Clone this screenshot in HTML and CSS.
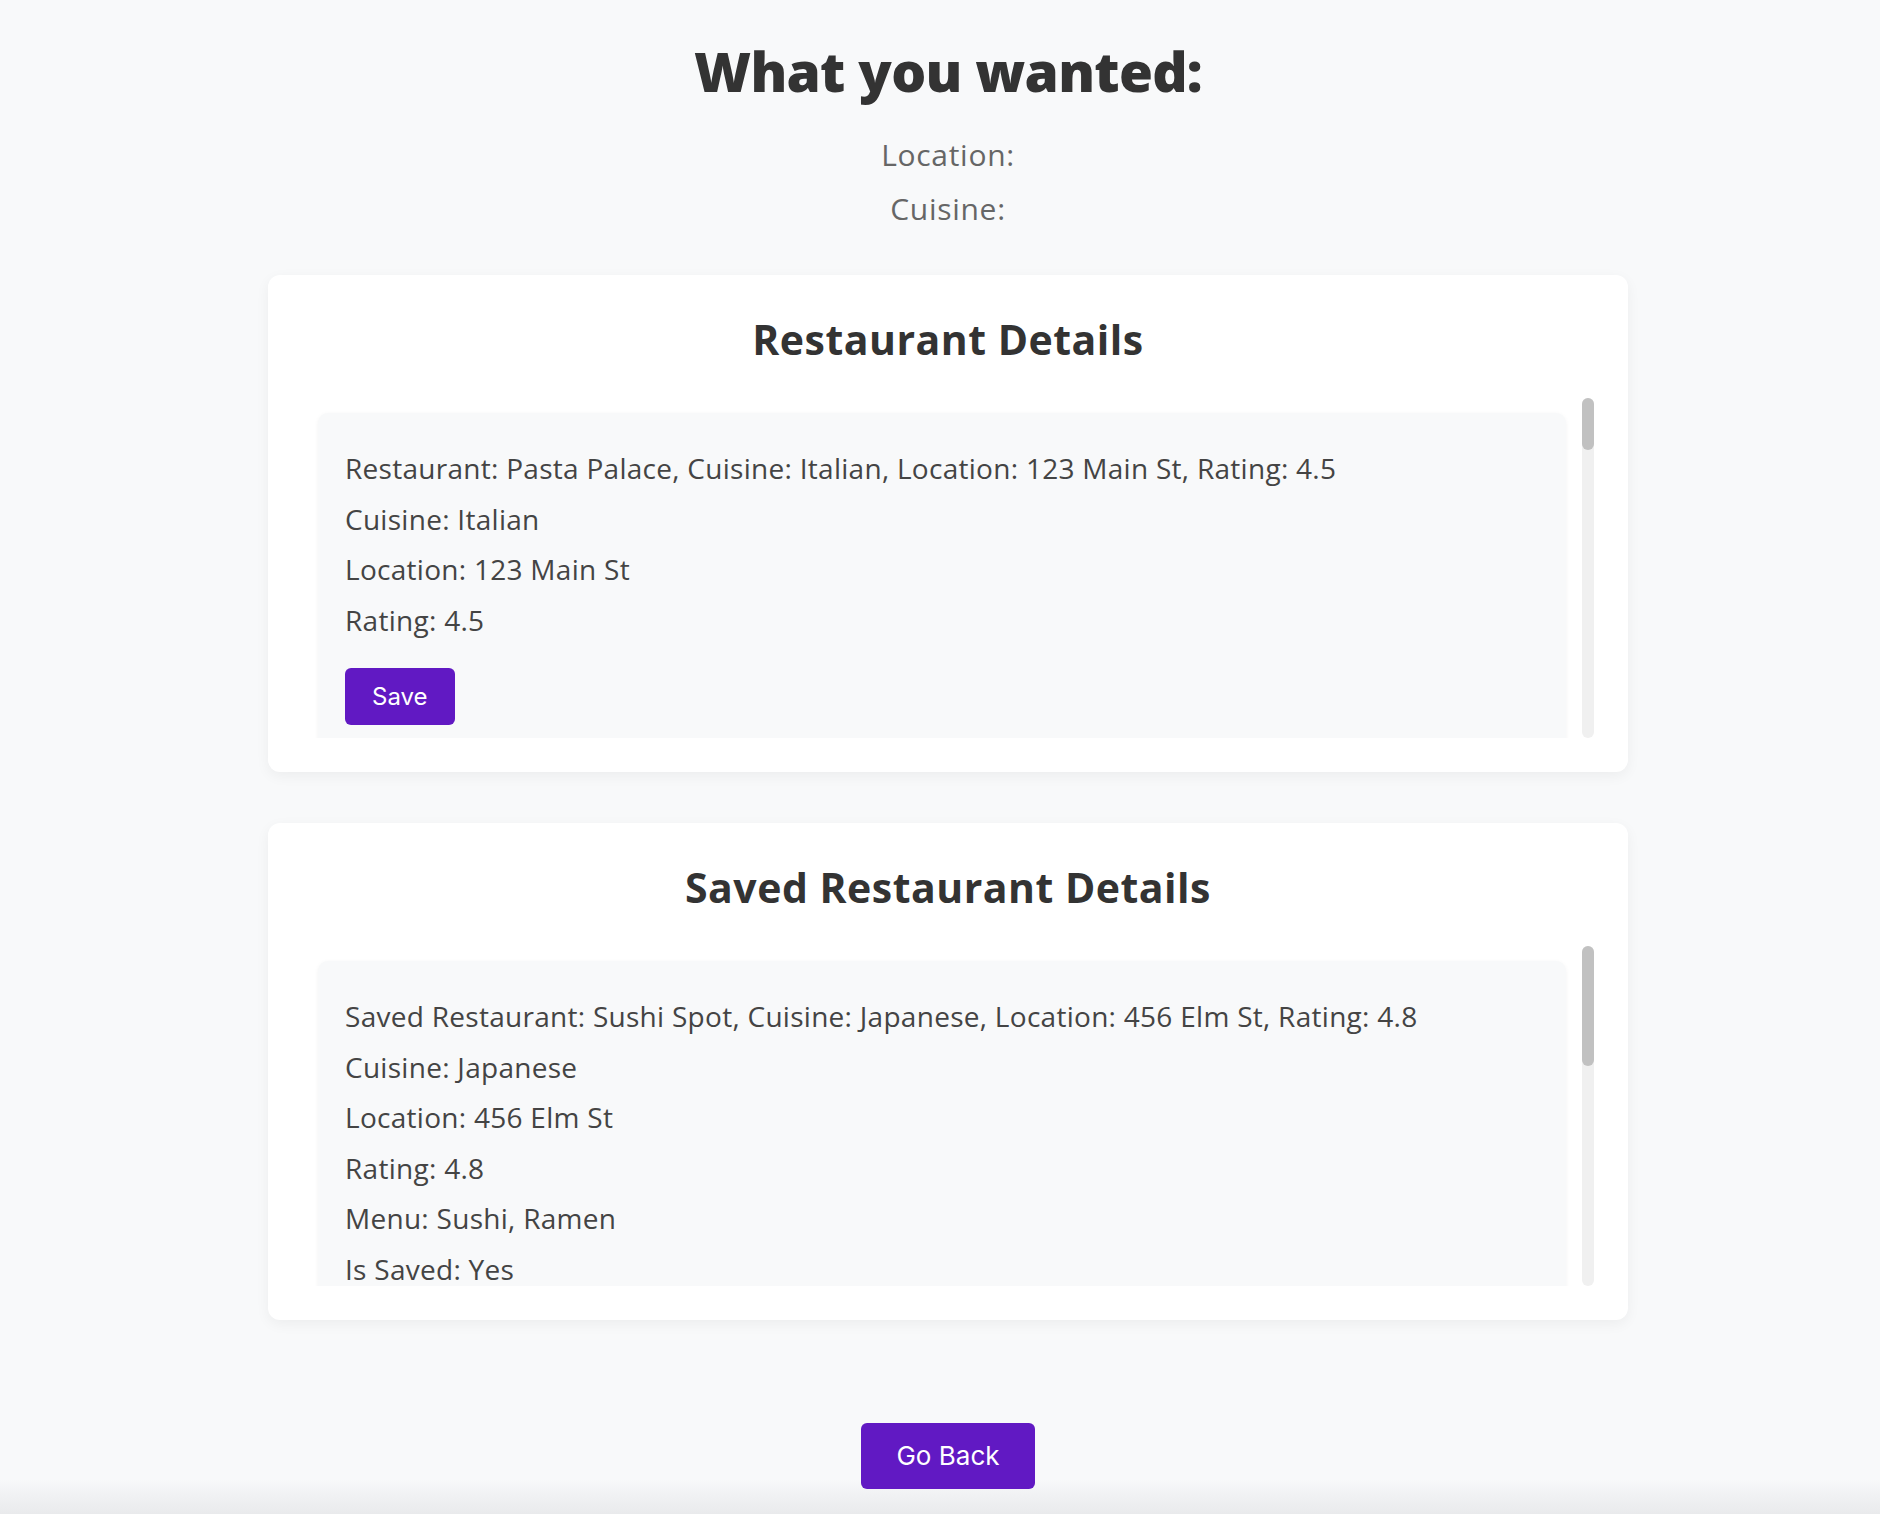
FILE: index.html
```html
<!DOCTYPE html>
<html lang="en">
<head>
<meta charset="utf-8">
<title>What you wanted</title>
<link rel="stylesheet" href="styles.css">
</head>
<body>
<div class="page">
  <main class="content">
    <h1 class="title">What you wanted:</h1>
    <div class="criteria">
      <p class="criteria-line">Location:</p>
      <p class="criteria-line">Cuisine:</p>
    </div>

    <section class="card">
      <h2 class="card-title">Restaurant Details</h2>
      <div class="scroll">
        <div class="scroll-view">
          <div class="list">
            <div class="item">
              <p class="line">Restaurant: Pasta Palace, Cuisine: Italian, Location: 123 Main St, Rating: 4.5</p>
              <p class="line">Cuisine: Italian</p>
              <p class="line">Location: 123 Main St</p>
              <p class="line">Rating: 4.5</p>
              <button class="btn btn-save" type="button">Save</button>
            </div>
          </div>
        </div>
        <div class="scrollbar"><div class="thumb thumb-results"></div></div>
      </div>
    </section>

    <section class="card card-saved">
      <h2 class="card-title">Saved Restaurant Details</h2>
      <div class="scroll">
        <div class="scroll-view">
          <div class="list">
            <div class="item">
              <p class="line">Saved Restaurant: Sushi Spot, Cuisine: Japanese, Location: 456 Elm St, Rating: 4.8</p>
              <p class="line">Cuisine: Japanese</p>
              <p class="line">Location: 456 Elm St</p>
              <p class="line">Rating: 4.8</p>
              <p class="line">Menu: Sushi, Ramen</p>
              <p class="line">Is Saved: Yes</p>
            </div>
          </div>
        </div>
        <div class="scrollbar"><div class="thumb thumb-saved"></div></div>
      </div>
    </section>

    <div class="actions">
      <button class="btn btn-back" type="button">Go Back</button>
    </div>
  </main>
</div>
</body>
</html>
```

FILE: styles.css
```css
html {
  min-height: 100%;
  background: linear-gradient(to bottom, #f8f9fa 0, #f8f9fa calc(100% - 34px), #f1f2f4 calc(100% - 20px), #e9eaec 100%);
}

body {
  margin: 0;
  font-family: "Open Sans", "Liberation Sans", sans-serif;
  color: #444;
}

.page {
  padding: 37px 0 0 16px;
}

.content {
  width: 1360px;
  margin: 0 auto;
}

.title {
  margin: 0;
  font-size: 55px;
  line-height: 67px;
  font-weight: 800;
  color: #333;
  text-align: center;
  letter-spacing: -0.7px;
}

.criteria {
  margin-top: 24px;
  text-align: center;
}

.criteria-line {
  margin: 0;
  font-size: 30px;
  line-height: 54px;
  letter-spacing: 0.7px;
  color: #666;
}

.card {
  margin-top: 39px;
  background: #fff;
  border-radius: 12px;
  padding: 39px 34px 34px;
  box-shadow: 0 4px 14px rgba(0, 0, 0, 0.05);
}

.card-saved {
  margin-top: 51px;
}

.card-title {
  margin: 0;
  font-size: 41px;
  line-height: 50px;
  font-weight: 700;
  letter-spacing: 0.5px;
  color: #333;
  text-align: center;
}

.scroll {
  margin-top: 34px;
  height: 340px;
  display: flex;
}

.scroll-view {
  flex: 1;
  overflow: hidden;
}

.scrollbar {
  width: 12px;
  flex: none;
  background: #f0f0f0;
  border-radius: 6px;
}

.thumb {
  background: #c1c1c1;
  border-radius: 6px;
}

.thumb-results {
  height: 52px;
}

.thumb-saved {
  height: 120px;
}

.list {
  padding: 15px 16px 16px;
}

.item {
  display: flex;
  flex-direction: column;
  align-items: flex-start;
  gap: 10px;
  background: #f8f9fa;
  border-radius: 10px;
  padding: 35px 27px 27px;
  box-shadow: 0 1px 4px rgba(0, 0, 0, 0.05);
}

.line {
  margin: 0;
  font-size: 28px;
  line-height: 40.5px;
  letter-spacing: 0.28px;
  color: #444;
}

.btn {
  border: none;
  background: #6119c3;
  color: #fff;
  font-family: "Inter", "Liberation Sans", sans-serif;
  border-radius: 6px;
  cursor: pointer;
}

.btn-save {
  margin-top: 18px;
  font-size: 24px;
  line-height: 28px;
  padding: 14.5px 27px;
}

.actions {
  margin-top: 103px;
  text-align: center;
}

.btn-back {
  font-size: 26px;
  line-height: 30px;
  padding: 18px 35px;
}
```
